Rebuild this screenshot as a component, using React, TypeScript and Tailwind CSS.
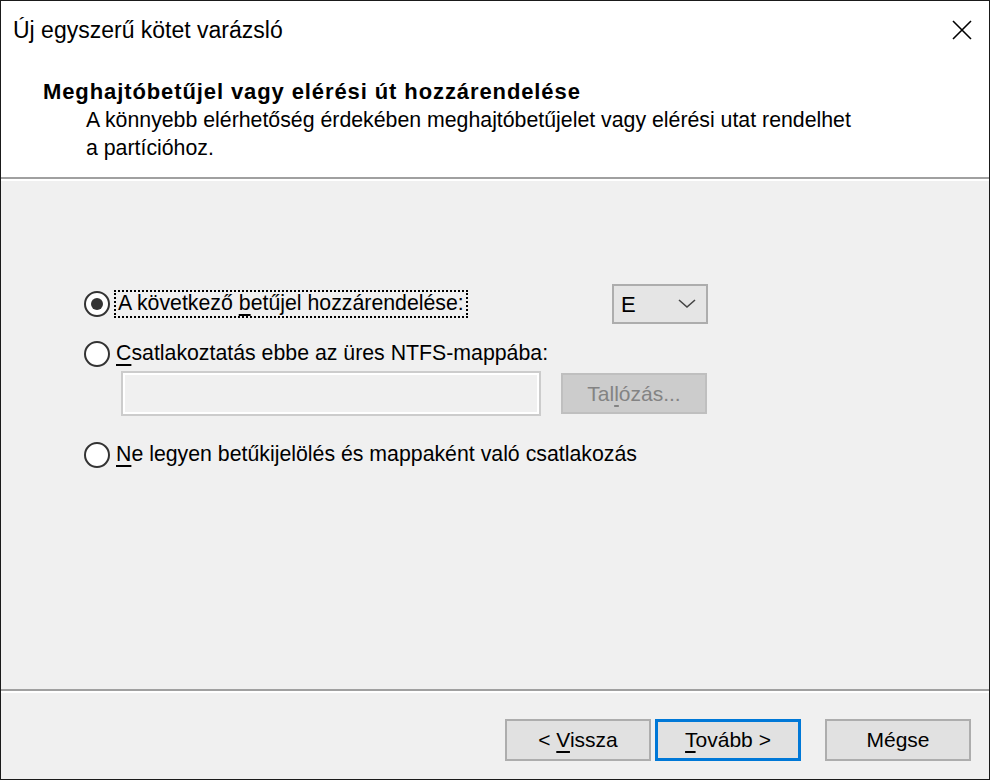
import React from "react";

const font = { fontFamily: '"Liberation Sans", Arial, sans-serif' };

function Radio({ checked }: { checked?: boolean }) {
  return (
    <div className="w-[26px] h-[26px] rounded-full border-2 border-[#333333] bg-white flex items-center justify-center shrink-0">
      {checked && <div className="w-[12px] h-[12px] rounded-full bg-[#333333]" />}
    </div>
  );
}

function U({ children }: { children: React.ReactNode }) {
  return <span className="underline decoration-[2px] underline-offset-[4px]">{children}</span>;
}

function Btn({ children, primary }: { children: React.ReactNode; primary?: boolean }) {
  return (
    <div
      className={
        "w-[146px] h-[42px] flex items-center justify-center bg-[#e1e1e1] text-[21px] text-black " +
        (primary ? "border-[3px] border-[#0078d7]" : "border-2 border-[#adadad]")
      }
    >
      <span className="whitespace-pre">{children}</span>
    </div>
  );
}

export default function App() {
  return (
    <div className="w-[991px] h-[780px] bg-white text-black" style={font}>
      <div className="w-[990px] h-[780px] border border-[#1a1a1a] flex flex-col">
        {/* header */}
        <div className="bg-white h-[176px] flex flex-col">
          <div className="h-[58px] flex items-center pl-[12px] pr-[17px]">
            <span className="text-[23px] leading-none">Új egyszerű kötet varázsló</span>
            <svg className="ml-auto" width="20" height="20" viewBox="0 0 20 20">
              <path d="M1 1 L19 19 M19 1 L1 19" stroke="#000" strokeWidth="1.6" fill="none" />
            </svg>
          </div>
          <div className="mt-[19px] pl-[42px] h-[28px] flex items-center">
            <span className="text-[22px] font-bold tracking-[0.9px] leading-none">
              Meghajtóbetűjel vagy elérési út hozzárendelése
            </span>
          </div>
          <div className="pl-[85px] text-[21.3px] leading-[28px]">
            <div>A könnyebb elérhetőség érdekében meghajtóbetűjelet vagy elérési utat rendelhet</div>
            <div>a partícióhoz.</div>
          </div>
        </div>
        <div className="h-[2px] bg-[#a0a0a0]" />
        <div className="h-[2px] bg-white" />

        {/* body */}
        <div className="flex-1 bg-[#f0f0f0] pl-[83px] pt-[103px] text-[21.3px]">
          <div className="flex items-center h-[40px]">
            <div className="w-[528px] flex items-center">
              <Radio checked />
              <div className="ml-[4px] h-[28px] px-[2px] flex items-center border-2 border-dotted border-black">
                <span>
                  A következő <U>b</U>etűjel hozzárendelése:
                </span>
              </div>
            </div>
            <div className="w-[96px] h-[40px] border-2 border-[#adadad] bg-[#e5e5e5] flex items-center pl-[7px] pr-[10px]">
              <span className="text-[22px]">E</span>
              <svg className="ml-auto" width="18" height="10" viewBox="0 0 18 10">
                <path d="M1 1 L9 8 L17 1" stroke="#444" strokeWidth="1.6" fill="none" />
              </svg>
            </div>
          </div>

          <div className="mt-[16px] flex items-center h-[28px]">
            <Radio />
            <div className="ml-[6px]">
              <U>C</U>satlakoztatás ebbe az üres NTFS-mappába:
            </div>
          </div>

          <div className="mt-[3px] ml-[37px] flex items-center h-[45px]">
            <div className="w-[420px] h-[45px] border-2 border-[#cccccc] bg-[#f0f0f0] shadow-[inset_0_0_0_2px_#ffffff]" />
            <div className="ml-[20px] w-[146px] h-[41px] bg-[#cccccc] border-2 border-[#bfbfbf] flex items-center justify-center text-[#838383] text-[21px]">
              <span>
                Tal<U>l</U>ózás...
              </span>
            </div>
          </div>

          <div className="mt-[25px] flex items-center h-[28px]">
            <Radio />
            <div className="ml-[6px]">
              <U>N</U>e legyen betűkijelölés és mappaként való csatlakozás
            </div>
          </div>
        </div>

        {/* footer */}
        <div className="h-[2px] bg-[#a0a0a0]" />
        <div className="h-[2px] bg-white" />
        <div className="bg-[#f0f0f0] h-[86px] pt-[26px] pr-[18px] flex justify-end items-start">
          <Btn>
            {"< "}
            <U>V</U>issza
          </Btn>
          <div className="ml-[4px]">
            <Btn primary>
              <U>T</U>ovább {">"}
            </Btn>
          </div>
          <div className="ml-[24px]">
            <Btn>Mégse</Btn>
          </div>
        </div>
      </div>
    </div>
  );
}
